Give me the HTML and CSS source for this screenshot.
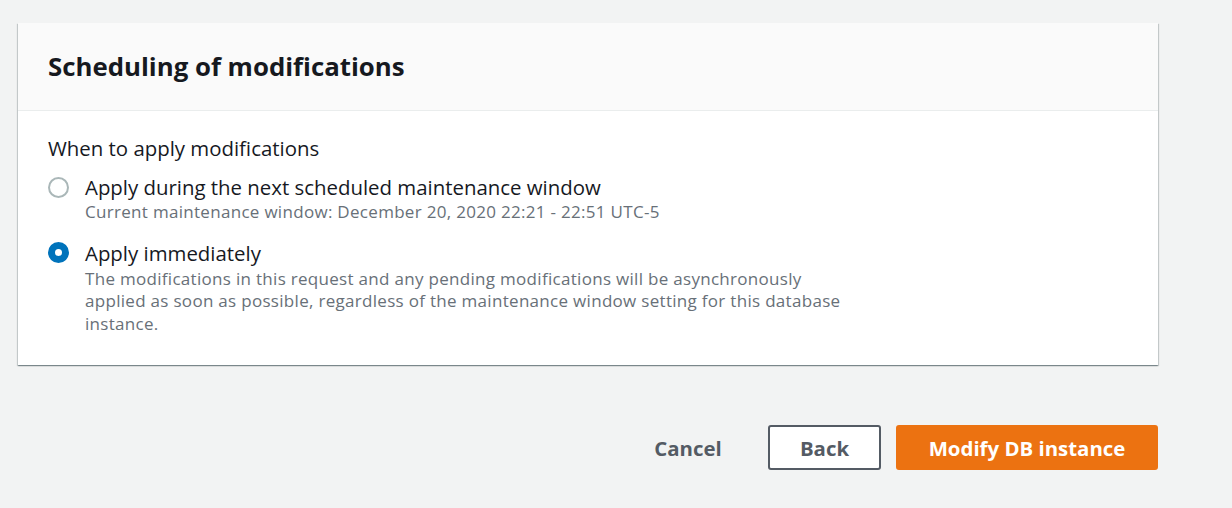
FILE: index.html
```html
<!DOCTYPE html>
<html>
<head>
<meta charset="utf-8">
<link rel="stylesheet" href="styles.css">
</head>
<body>
<div class="page">
  <div class="card">
    <div class="card-header">
      <h2 class="title">Scheduling of modifications</h2>
    </div>
    <div class="card-body">
      <div class="field-label">When to apply modifications</div>
      <div class="options">
        <div class="option">
          <span class="radio"></span>
          <div class="option-text">
            <div class="option-label">Apply during the next scheduled maintenance window</div>
            <div class="option-desc">Current maintenance window: December 20, 2020 22:21 - 22:51 UTC-5</div>
          </div>
        </div>
        <div class="option">
          <span class="radio checked"></span>
          <div class="option-text">
            <div class="option-label">Apply immediately</div>
            <div class="option-desc wrap">The modifications in this request and any pending modifications will be asynchronously applied as soon as possible, regardless of the maintenance window setting for this database instance.</div>
          </div>
        </div>
      </div>
    </div>
  </div>
  <div class="actions">
    <button class="btn btn-link">Cancel</button>
    <button class="btn btn-normal">Back</button>
    <button class="btn btn-primary">Modify DB instance</button>
  </div>
</div>
</body>
</html>
```
FILE: styles.css
```css
* { box-sizing: border-box; }
html, body { margin: 0; padding: 0; }
body {
  background: #f2f3f3;
  font-family: "Open Sans", "Noto Sans", sans-serif;
  color: #16191f;
  width: 1232px;
  height: 508px;
  overflow: hidden;
}
.page {
  padding: 23px 0 0 18px;
  width: 1158px;
}
.card {
  background: #fff;
  width: 1140px;
  box-shadow: 0 1px 1px 0 rgba(0, 28, 36, 0.3), 1px 1px 1px 0 rgba(0, 28, 36, 0.15), -1px 1px 1px 0 rgba(0, 28, 36, 0.15);
}
.card-header {
  background: #fafafa;
  border-bottom: 1px solid #eaeded;
  height: 88px;
  padding: 0 30px;
  display: flex;
  align-items: center;
}
.title {
  margin: 0;
  font-size: 25.8px;
  font-weight: 700;
  line-height: 32px;
  margin-top: -2px;
}
.card-body {
  padding: 23px 30px 30px;
}
.field-label {
  font-size: 20.4px;
  line-height: 28px;
}
.options {
  display: flex;
  flex-direction: column;
  gap: 15px;
  margin-top: 11px;
}
.option {
  display: flex;
  align-items: flex-start;
  gap: 16px;
}
.radio {
  flex: none;
  width: 21px;
  height: 21px;
  border-radius: 50%;
  border: 2px solid #aab7b8;
  background: #fff;
  margin-top: 3.5px;
}
.radio.checked {
  border: 7px solid #0073bb;
}
.option-label {
  font-size: 20.4px;
  line-height: 28px;
}
.option-desc {
  font-size: 17px;
  letter-spacing: 0.3px;
  line-height: 22.5px;
  color: #687078;
}
.option-desc.wrap {
  max-width: 765px;
  margin-top: 1px;
}
.actions {
  display: flex;
  justify-content: flex-end;
  align-items: center;
  gap: 15px;
  margin-top: 60px;
}
.btn {
  font-family: inherit;
  font-size: 20.4px;
  font-weight: 700;
  height: 45px;
  border-radius: 3px;
  padding: 0;
  cursor: pointer;
}
.btn-link {
  background: transparent;
  border: none;
  color: #545b64;
  width: 130px;
}
.btn-normal {
  background: #fff;
  border: 2px solid #545b64;
  color: #545b64;
  width: 113px;
}
.btn-primary {
  background: #ec7211;
  border: 2px solid #ec7211;
  color: #fff;
  width: 262px;
}
```
